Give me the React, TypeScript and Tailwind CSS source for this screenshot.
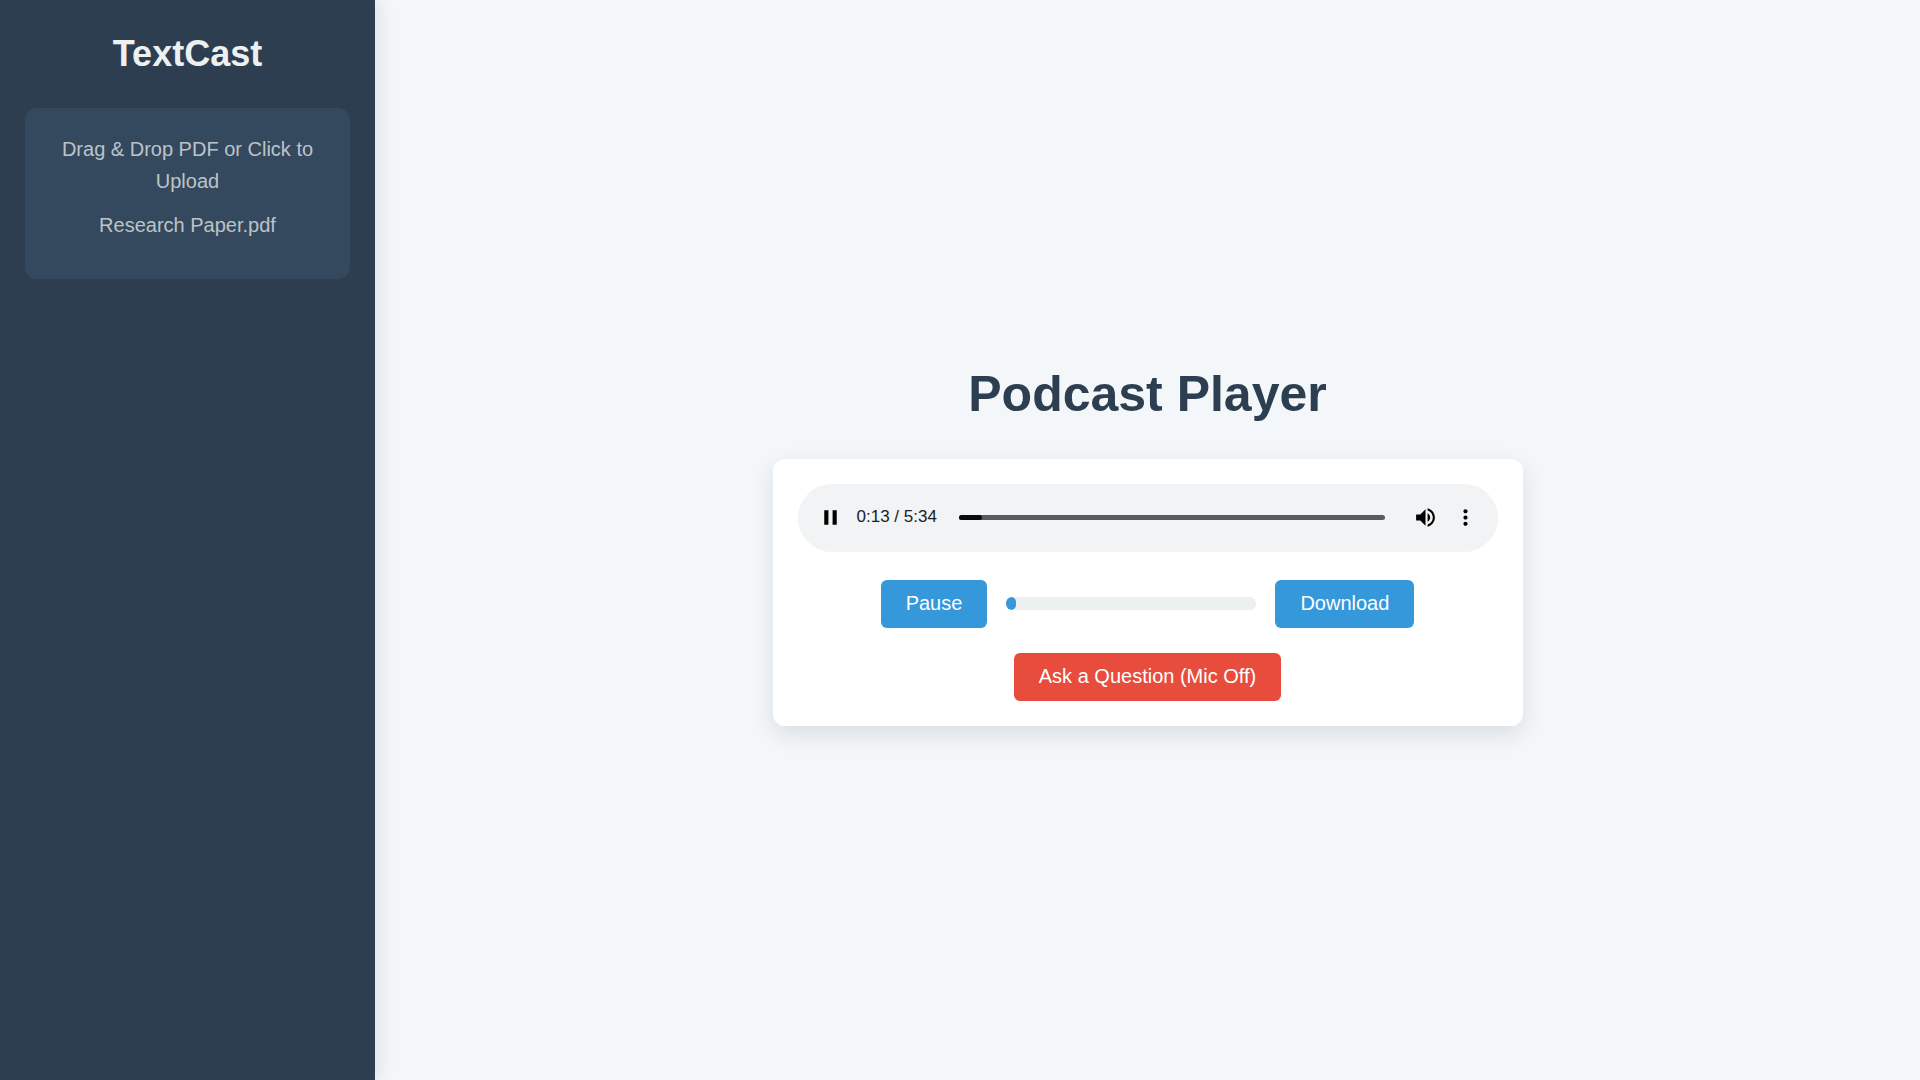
import React, { useState } from "react";

const DURATION = 334;

function formatTime(seconds: number) {
  return `${Math.floor(seconds / 60)}:${String(seconds % 60).padStart(2, "0")}`;
}

function Icon({ d }: { d: string }) {
  return (
    <svg viewBox="0 0 24 24" className="block size-[25px]" fill="currentColor" aria-hidden="true">
      <path d={d} />
    </svg>
  );
}

const PAUSE = "M6 19h4V5H6v14zm8-14v14h4V5h-4z";
const VOLUME =
  "M3 9v6h4l5 5V4L7 9H3zm13.5 3c0-1.77-1.02-3.29-2.5-4.03v8.05c1.48-.73 2.5-2.25 2.5-4.02zM14 3.23v2.06c2.89.86 5 3.54 5 6.71s-2.11 5.85-5 6.71v2.06c4.01-.91 7-4.49 7-8.77s-2.99-7.86-7-8.77z";
const MORE =
  "M12 8c1.1 0 2-.9 2-2s-.9-2-2-2-2 .9-2 2 .9 2 2 2zm0 2c-1.1 0-2 .9-2 2s.9 2 2 2 2-.9 2-2-.9-2-2-2zm0 6c-1.1 0-2 .9-2 2s.9 2 2 2 2-.9 2-2-.9-2-2-2z";

function Sidebar() {
  return (
    <aside className="z-10 w-[375px] shrink-0 bg-[#2c3e50] p-[25px] text-center shadow-[3px_0_18px_rgba(0,0,0,0.1)]">
      <h1 className="mb-[25px] text-[36px] leading-[58px] font-bold text-[#ecf0f1]">TextCast</h1>
      <label className="block cursor-pointer rounded-xl bg-[#34495e] px-[25px] pt-[25px] pb-[38px] text-xl leading-8 text-[#bdc3c7]">
        <input type="file" accept="application/pdf" className="sr-only" />
        <span className="block">Drag &amp; Drop PDF or Click to Upload</span>
        <span className="mt-3 block">Research Paper.pdf</span>
      </label>
    </aside>
  );
}

function AudioBar({ time, onSeek }: { time: number; onSeek: (t: number) => void }) {
  return (
    <div className="flex h-[68px] items-center rounded-full bg-[#f1f3f4] px-5 pb-0.5 text-black">
      <button type="button" aria-label="Pause audio">
        <Icon d={PAUSE} />
      </button>
      <span className="ml-3.5 text-[17px] leading-6 whitespace-nowrap text-[#202124]">
        {formatTime(time)} / {formatTime(DURATION)}
      </span>
      <div className="relative ml-[22px] h-[5px] flex-1 rounded-full bg-[#5a5a5a]">
        <div
          className="h-full rounded-full bg-[#0a0a0a]"
          style={{ width: `${(time / DURATION) * 100 + 1.5}%` }}
        />
        <input
          type="range"
          aria-label="Seek"
          min={0}
          max={DURATION}
          value={time}
          onChange={(e) => onSeek(Number(e.target.value))}
          className="absolute inset-0 w-full cursor-pointer opacity-0"
        />
      </div>
      <button type="button" aria-label="Mute" className="ml-7">
        <Icon d={VOLUME} />
      </button>
      <button type="button" aria-label="More options" className="ml-[15px]">
        <Icon d={MORE} />
      </button>
    </div>
  );
}

export default function App() {
  const [time, setTime] = useState(13);

  return (
    <div className="flex min-h-screen bg-[#f4f7fa] font-['Liberation_Sans',Arial,sans-serif]">
      <Sidebar />
      <main className="flex flex-1 flex-col items-center justify-center px-6">
        <h2 className="mb-[25px] text-[50px] leading-[80px] font-bold text-[#2c3e50]">Podcast Player</h2>
        <section className="w-full max-w-[750px] rounded-xl bg-white p-[25px] shadow-[0_8px_25px_rgba(0,0,0,0.1)]">
          <AudioBar time={time} onSeek={setTime} />
          <div className="mt-7 flex items-center justify-center gap-[19px]">
            <button type="button" className="h-12 rounded-md bg-[#3498db] px-[25px] pb-0.5 text-xl leading-6 text-white">
              Pause
            </button>
            <div
              role="progressbar"
              aria-label="Playback progress"
              aria-valuenow={Math.round((time / DURATION) * 100)}
              className="mb-px h-[13px] w-[250px] overflow-hidden rounded-md bg-[#ecf0f1]"
            >
              <div
                className="h-full rounded-md bg-[#3498db]"
                style={{ width: `${(time / DURATION) * 100}%` }}
              />
            </div>
            <button type="button" className="h-12 rounded-md bg-[#3498db] px-[25px] pb-0.5 text-xl leading-6 text-white">
              Download
            </button>
          </div>
          <div className="mt-[25px] flex justify-center">
            <button type="button" className="h-12 rounded-md bg-[#e74c3c] px-[25px] pb-0.5 text-xl leading-6 text-white">
              Ask a Question (Mic Off)
            </button>
          </div>
        </section>
      </main>
    </div>
  );
}
